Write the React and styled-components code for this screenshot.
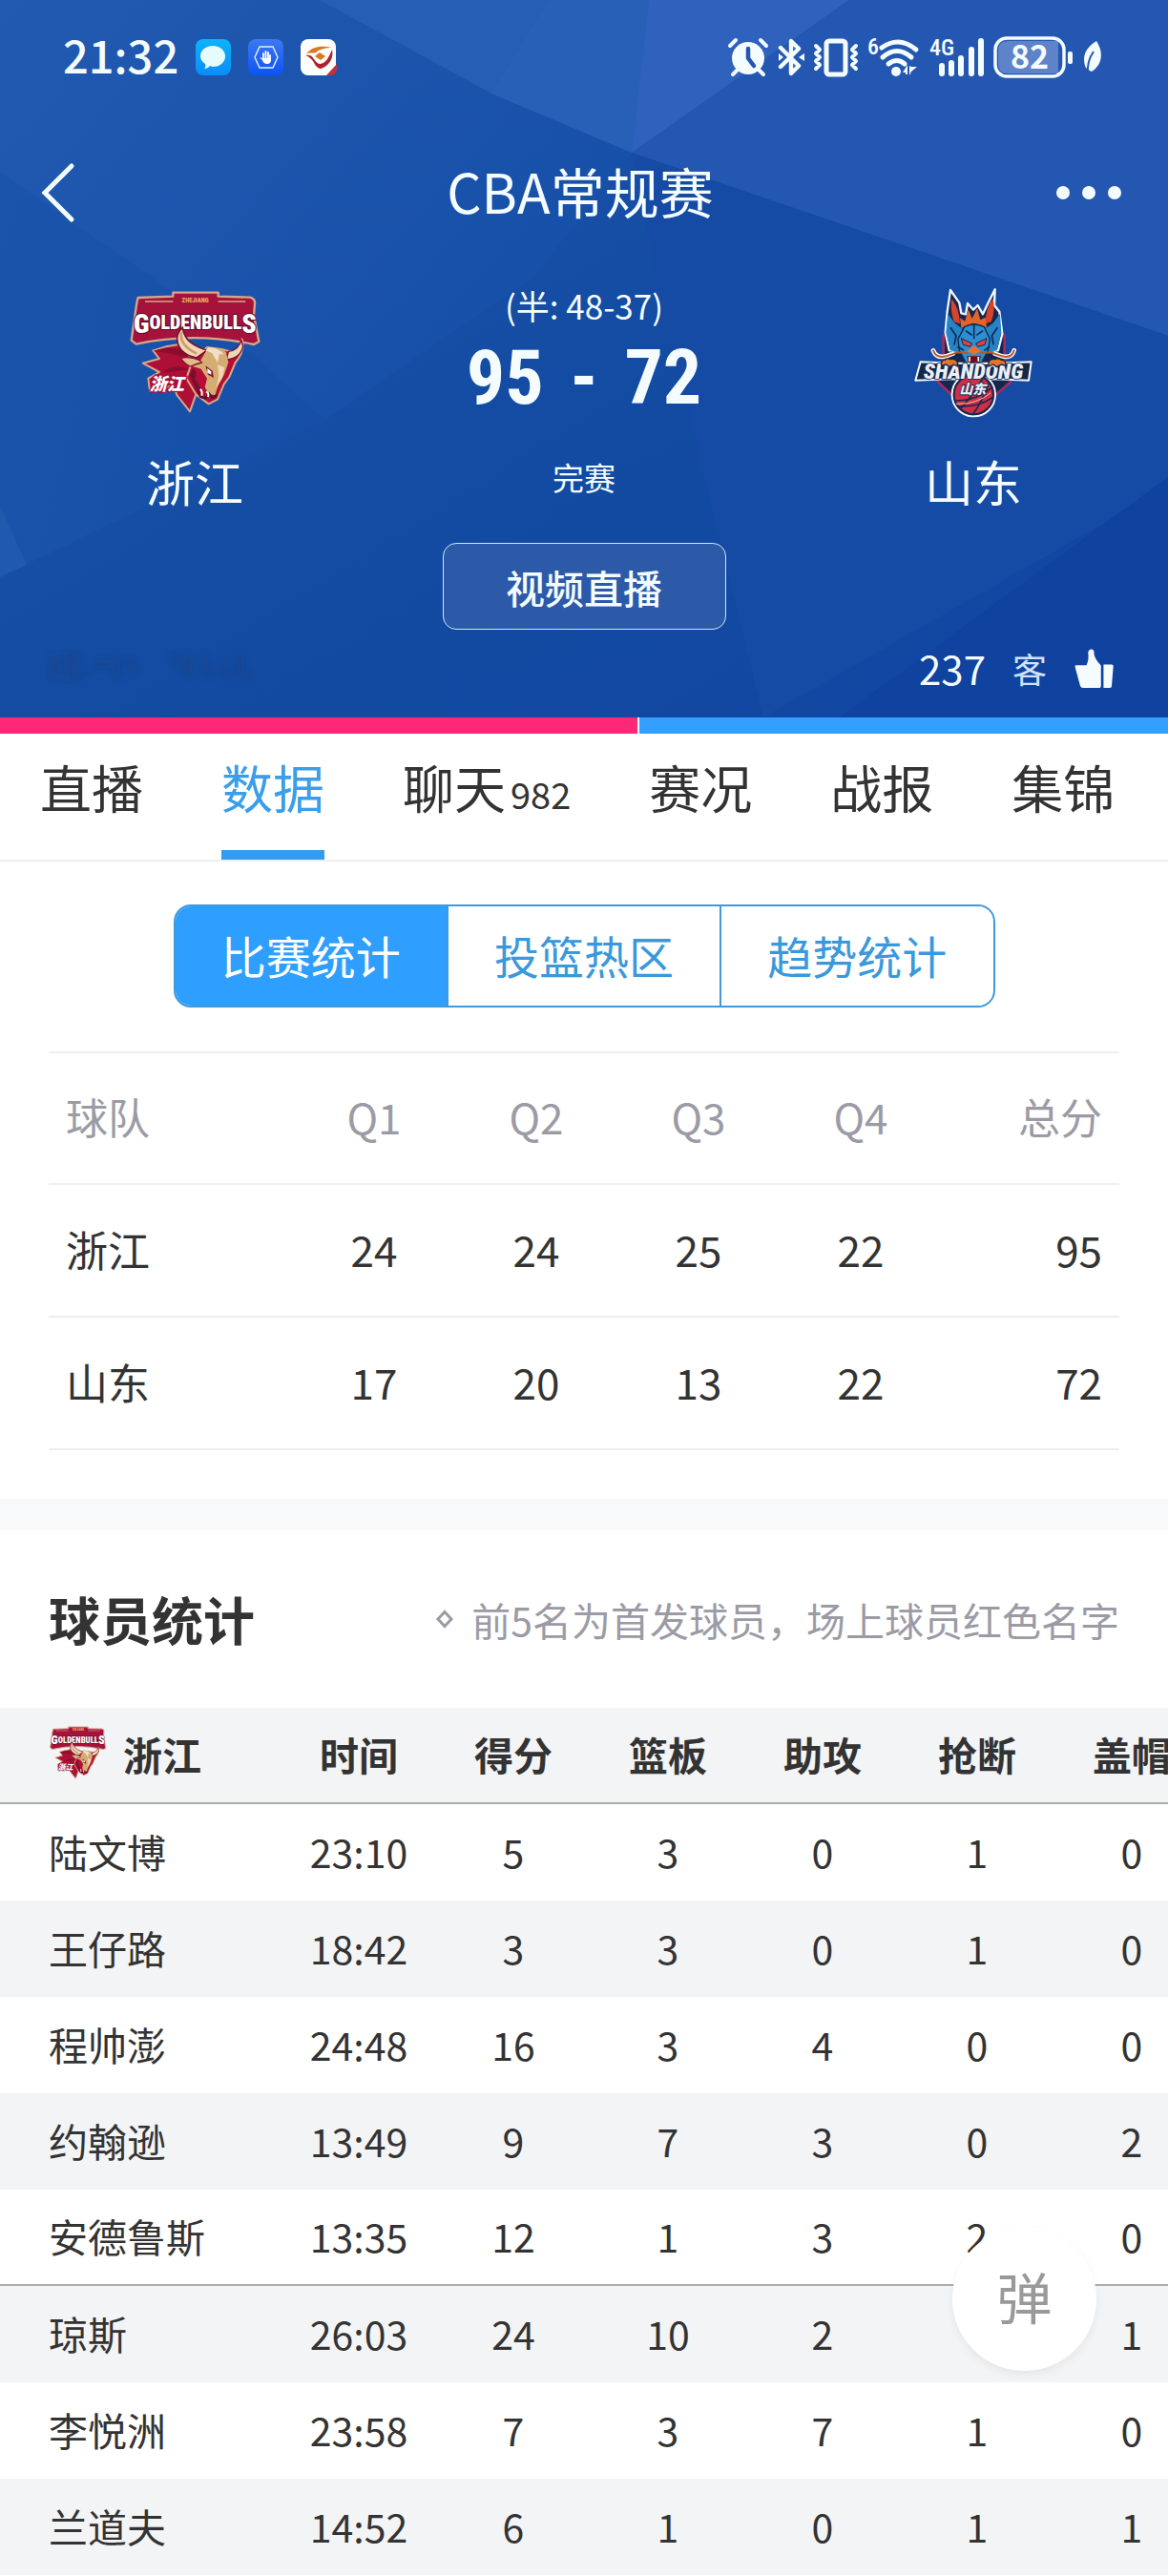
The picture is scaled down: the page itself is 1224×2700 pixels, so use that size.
import React from 'react';
import styled, { createGlobalStyle } from 'styled-components';

const GlobalStyle = createGlobalStyle`
  * {
    box-sizing: border-box;
  }
  body {
    margin: 0;
    background: #fff;
    color: #333;
    font-family: 'Noto Sans CJK SC', 'Noto Sans', sans-serif;
  }
  button {
    border: 0;
    padding: 0;
    background: none;
    color: inherit;
    font-family: inherit;
    cursor: pointer;
  }
  a {
    color: inherit;
    text-decoration: none;
  }
`;

const Page = styled.div`
  overflow: hidden;
`;

const Hero = styled.header`
  position: relative;
  overflow: hidden;
  padding-bottom: 12px;
  background: #1450a6;
  color: #f4fcff;
`;

const Backdrop = styled.svg`
  position: absolute;
  inset: 0;
  width: 100%;
  height: 100%;
`;

const HeroContent = styled.div`
  position: relative;
`;

const StatusBar = styled.div`
  display: flex;
  align-items: center;
  justify-content: space-between;
  height: 120px;
  padding: 0 68px 0 66px;
`;

const StatusGroup = styled.div`
  display: flex;
  align-items: center;
  gap: ${({ $gap }) => $gap}px;
`;

const Clock = styled.time`
  padding-bottom: 6px;
  font-size: 47px;
  font-weight: 500;
  line-height: 56px;
`;

const NavBar = styled.div`
  display: grid;
  grid-template-columns: 1fr auto 1fr;
  align-items: center;
  height: 164px;
  padding: 0 48px 0 40px;
`;

const IconButton = styled.button`
  display: flex;
  justify-self: ${({ $align }) => $align};
`;

const Title = styled.h1`
  margin: 0;
  padding-bottom: 6px;
  font-size: 57px;
  font-weight: 400;
  line-height: 80px;
`;

const Match = styled.div`
  display: grid;
  grid-template-columns: 1fr 1fr 1fr;
  padding-top: 16px;
`;

const Column = styled.div`
  display: flex;
  flex-direction: column;
  align-items: center;
`;

const TeamName = styled.div`
  margin-top: 26px;
  font-size: 51px;
  line-height: 76px;
`;

const Small = styled.div`
  font-size: ${({ $size }) => $size}px;
  line-height: 40px;
`;

const Score = styled.div`
  display: flex;
  justify-content: center;
  gap: 28px;
  margin: 16px 0 44px;
  font-family: 'Roboto Condensed', 'Noto Sans CJK SC', sans-serif;
  font-size: 80px;
  font-weight: 700;
  line-height: 80px;
`;

const LiveButton = styled.button`
  width: 297px;
  height: 91px;
  margin-top: 49px;
  border: 1px solid #c8eaf5;
  border-radius: 14px;
  background: #2c5aa8;
  font-size: 41px;
  font-weight: 500;
`;

const Votes = styled.div`
  display: flex;
  align-items: center;
  justify-content: space-between;
  height: 80px;
  padding: 0 56px 0 48px;
`;

const VoteGroup = styled.div`
  display: flex;
  align-items: center;
  gap: 28px;
`;

const VoteCount = styled.span`
  font-size: 42px;
  line-height: 56px;
`;

const VoteSide = styled.span`
  font-size: 36px;
  line-height: 56px;
  color: #cfe2fa;
`;

const VoteBar = styled.div`
  display: flex;
  gap: 2px;
  height: 17px;
`;

const VoteShare = styled.div`
  background: ${({ $color }) => $color};
`;

const Tabs = styled.nav`
  display: flex;
  gap: 82px;
  height: 134px;
  padding-left: 42px;
  border-bottom: 2px solid #eee;
`;

const Tab = styled.a`
  display: flex;
  align-items: baseline;
  height: 132px;
  padding-top: 16px;
  border-bottom: 10px solid ${({ $active }) => ($active ? '#359bef' : 'transparent')};
  color: ${({ $active }) => ($active ? '#3a9eea' : '#333')};
  font-size: 54px;
  line-height: 80px;
  white-space: nowrap;
`;

const TabCount = styled.span`
  margin-left: 5px;
  font-size: 38px;
`;

const Segments = styled.div`
  display: flex;
  width: 861px;
  height: 108px;
  margin: 45px auto 0;
  border: 2px solid #4099dc;
  border-radius: 18px;
  overflow: hidden;
`;

const Segment = styled.button`
  flex: 1;
  padding-bottom: 4px;
  background: ${({ $active }) => ($active ? '#2f9fff' : '#fff')};
  color: ${({ $active }) => ($active ? '#fff' : '#3a98dc')};
  font-size: 47px;

  & + & {
    border-left: 2px solid #4099dc;
  }
`;

const QuarterSection = styled.section`
  padding: 46px 51px 51px;
`;

const QuarterTable = styled.table`
  width: 100%;
  table-layout: fixed;
  border-spacing: 0;
  border-top: 2px solid #eee;
`;

const QuarterCell = styled.td`
  width: ${({ $width }) => ($width ? `${$width}px` : 'auto')};
  height: ${({ $head }) => ($head ? 138 : 139)}px;
  padding: 0 18px 4px;
  border-bottom: 2px solid #eee;
  color: ${({ $head }) => ($head ? '#9b9ba5' : '#333')};
  font-size: 44px;
  font-weight: 400;
  line-height: 64px;
  text-align: ${({ $align }) => $align || 'center'};
`;

const Divider = styled.div`
  height: 33px;
  background: #f8f9fb;
`;

const SectionHead = styled.div`
  display: flex;
  align-items: center;
  justify-content: space-between;
  height: 186px;
  padding: 0 51px;
`;

const SectionTitle = styled.h2`
  margin: 0;
  font-size: 54px;
  font-weight: 700;
  line-height: 80px;
`;

const Note = styled.p`
  display: flex;
  align-items: center;
  gap: 18px;
  margin: 0;
  color: #9b9ba5;
  font-size: 41px;
  line-height: 60px;
`;

const Scroller = styled.div`
  overflow-x: auto;
  scrollbar-width: none;
`;

const PlayerTable = styled.table`
  width: 1267px;
  table-layout: fixed;
  border-spacing: 0;
`;

const PlayerRow = styled.tr`
  background: ${({ $shaded }) => ($shaded ? '#f3f4f6' : '#fff')};

  & > * {
    height: 101px;
    padding: 0 0 4px;
    border-bottom: ${({ $ruled }) => ($ruled ? '2px solid #adadad' : '0')};
    font-size: 41px;
    line-height: 60px;
  }
`;

const StatHead = styled.th`
  width: 162px;
  font-weight: 700;
  text-align: center;
`;

const TeamHead = styled.th`
  width: 295px;
  text-align: left;
`;

const TeamLabel = styled.div`
  display: flex;
  align-items: center;
  gap: 17px;
  padding-left: 51px;
`;

const PlayerName = styled.th`
  font-weight: 400;
  text-align: left;

  & > a {
    padding-left: 51px;
  }
`;

const Stat = styled.td`
  text-align: center;
`;

const BarrageButton = styled.button`
  position: fixed;
  right: 75px;
  bottom: 215px;
  width: 151px;
  height: 151px;
  padding-bottom: 8px;
  border-radius: 50%;
  background: #fff;
  box-shadow: 0 4px 10px rgba(0, 0, 0, 0.06);
  color: #999;
  font-size: 58px;
`;

const votes = { home: 286, away: 237 };

const tabs = [
  { name: '直播' },
  { name: '数据', active: true },
  { name: '聊天', count: 982 },
  { name: '赛况' },
  { name: '战报' },
  { name: '集锦' },
];

const segments = ['比赛统计', '投篮热区', '趋势统计'];

const quarters = [
  { team: '浙江', points: [24, 24, 25, 22], total: 95 },
  { team: '山东', points: [17, 20, 13, 22], total: 72 },
];

const statNames = ['时间', '得分', '篮板', '助攻', '抢断', '盖帽'];

const players = [
  { name: '陆文博', stats: ['23:10', 5, 3, 0, 1, 0] },
  { name: '王仔路', stats: ['18:42', 3, 3, 0, 1, 0] },
  { name: '程帅澎', stats: ['24:48', 16, 3, 4, 0, 0] },
  { name: '约翰逊', stats: ['13:49', 9, 7, 3, 0, 2] },
  { name: '安德鲁斯', stats: ['13:35', 12, 1, 3, 2, 0] },
  { name: '琼斯', stats: ['26:03', 24, 10, 2, null, 1] },
  { name: '李悦洲', stats: ['23:58', 7, 3, 7, 1, 0] },
  { name: '兰道夫', stats: ['14:52', 6, 1, 0, 1, 1] },
];

const Facets = () => (
  <Backdrop viewBox="0 0 1224 752" preserveAspectRatio="none" aria-hidden="true">
    <defs>
      <linearGradient id="base" x1="0" y1="0" x2="1" y2="1">
        <stop offset="0" stopColor="#2159b0" />
        <stop offset="0.5" stopColor="#134ca2" />
        <stop offset="1" stopColor="#1145a2" />
      </linearGradient>
      <linearGradient id="leftFacet" x1="0" y1="0" x2="1" y2="0.6">
        <stop offset="0" stopColor="#225ab2" />
        <stop offset="1" stopColor="#164fa7" />
      </linearGradient>
      <linearGradient id="lowFacet" x1="0" y1="0" x2="1" y2="0.3">
        <stop offset="0" stopColor="#1b54ab" />
        <stop offset="1" stopColor="#164fa7" />
      </linearGradient>
    </defs>
    <path d="M0 0H1224V752H0Z" fill="url(#base)" />
    <path d="M0 0H335L515 98 662 160 560 290 340 440 0 180Z" fill="url(#leftFacet)" />
    <path d="M0 180 230 340 340 440 0 605Z" fill="url(#lowFacet)" />
    <path d="M0 530 28 592 0 605Z" fill="#1f5aae" />
    <path d="M335 0H890L662 160 515 98Z" fill="#265eb5" />
    <path d="M575 0H890L662 160 515 98Z" fill="#285fb7" />
    <path d="M680 0H890L662 160Z" fill="#2f62bc" />
    <path d="M890 0H1224V352L662 160Z" fill="#2457b1" />
    <path d="M662 160 1224 352V510L800 752 690 300Z" fill="#164ba5" />
    <path d="M1224 500V752H880Z" fill="#10429f" />
  </Backdrop>
);

const MessageIcon = () => (
  <svg width="37" height="38" viewBox="0 0 37 38">
    <defs>
      <linearGradient id="msg" x1="0" y1="0" x2="0" y2="1">
        <stop offset="0" stopColor="#0cb4f8" />
        <stop offset="1" stopColor="#0a8cfb" />
      </linearGradient>
    </defs>
    <rect width="37" height="38" rx="8" fill="url(#msg)" />
    <path d="M18 7c8 0 13 5 13 11s-5 11-13 11l-3-1c-1 2-4 3-6 3 1-1 2-3 1-5-3-2-5-5-5-8C5 12 10 7 18 7z" fill="#e6fbfc" />
  </svg>
);

const HandIcon = () => (
  <svg width="37" height="38" viewBox="0 0 37 38">
    <defs>
      <linearGradient id="hand" x1="0" y1="0" x2="0" y2="1">
        <stop offset="0" stopColor="#3f79ee" />
        <stop offset="1" stopColor="#0b53f5" />
      </linearGradient>
    </defs>
    <rect width="37" height="38" rx="8" fill="url(#hand)" />
    <path d="M12 8h14l5 11-5 11H12L7 19z" fill="none" stroke="#e2f0ff" strokeWidth="1.4" />
    <path d="M16 21v-6M18.500 20v-7M21 20v-6M23 21v-4" fill="none" stroke="#fff" strokeWidth="1.800" strokeLinecap="round" />
    <path d="M12 19l3 1h9v3q-1 3-4 3-4 0-5-4z" fill="#fff" />
  </svg>
);

const BrandIcon = () => (
  <svg width="38" height="38" viewBox="0 0 38 38">
    <rect width="37" height="38" rx="8" fill="#fdfdfb" />
    <path d="M6 15C12 8 22 6 33 9c-7 0-14 2-17 5-3 1-6 0-10 1z" fill="#d9781f" />
    <path d="M5 17c4-1 7 0 9 4 2 3 4 5 7 5 6-1 9-8 12-15 2 9-3 17-12 20-5-1-6-5-8-8-2-2-4-5-8-6z" fill="#b0202d" />
    <path d="M20 14l6 4-5 4-6-4z" fill="#d9781f" />
    <path d="M38 26v6q-1 6-8 6h-3z" fill="#c3303a" />
  </svg>
);

const AlarmIcon = () => (
  <svg width="44" height="44" viewBox="0 0 44 44">
    <circle cx="22" cy="23" r="17" fill="#f4fcff" />
    <path d="M22 13v10l6 8" fill="none" stroke="#2457b1" strokeWidth="4.500" strokeLinecap="round" strokeLinejoin="round" />
    <path d="M3 10l6-6M41 10l-6-6M11 35l-5 5M33 35l5 5" fill="none" stroke="#f4fcff" strokeWidth="4" strokeLinecap="round" />
  </svg>
);

const BluetoothIcon = () => (
  <svg width="28" height="42" viewBox="0 0 28 42">
    <path d="M3 11l19 19-8 8V4l8 8L3 31" fill="none" stroke="#f4fcff" strokeWidth="4.400" strokeLinejoin="round" strokeLinecap="round" />
    <path d="M1 17l5 4-5 4zM28 17l-6 4 6 4z" fill="#f4fcff" />
  </svg>
);

const VibrateIcon = () => (
  <svg width="48" height="42" viewBox="0 0 48 42">
    <g fill="none" stroke="#f4fcff" strokeWidth="5" strokeLinejoin="round" strokeLinecap="round">
      <rect x="14" y="4" width="20" height="35" rx="3" />
      <path d="M3 9l4 4-4 4 4 4-4 4 4 4-4 4M45 9l-4 4 4 4-4 4 4 4-4 4 4 4" strokeWidth="4" />
    </g>
  </svg>
);

const IconText = styled.text`
  fill: #f4fcff;
  font-family: 'Roboto Condensed', 'Noto Sans CJK SC', sans-serif;
  font-size: ${({ $size }) => $size}px;
  font-weight: 500;
`;

const WifiIcon = () => (
  <svg width="56" height="56" viewBox="0 -6 56 56">
    <IconText $size={24} x="0" y="19">6</IconText>
    <g fill="none" stroke="#f4fcff" strokeWidth="5" strokeLinecap="round">
      <path d="M15 12Q33-1 51 14" />
      <path d="M16 22Q31 9 46 22" />
      <path d="M22 29Q31 22 39 29" />
    </g>
    <circle cx="30" cy="37" r="5" fill="#f4fcff" />
    <path d="M37 38l5-8v10h-2v-2zM44 31v10l2-4 6-5h-6z" fill="#f4fcff" />
  </svg>
);

const SignalIcon = () => (
  <svg width="58" height="56" viewBox="0 -6 58 56">
    <IconText $size={24} x="0" y="20">4G</IconText>
    <path d="M13 39v-8M23 39V28M33 39V23M44 39V14M54 39V5" stroke="#f4fcff" strokeWidth="6" strokeLinecap="round" />
  </svg>
);

const BatteryIcon = () => (
  <svg width="84" height="60" viewBox="0 -8 84 60">
    <path d="M15 5h53v34H15Q5 39 5 29V15Q5 5 15 5z" fill="#5f83c9" />
    <rect x="2" y="2" width="72" height="40" rx="12" fill="none" stroke="#f4fcff" strokeWidth="3.500" />
    <rect x="78" y="16" width="5" height="13" rx="2" fill="#f4fcff" />
    <text x="38" y="34" textAnchor="middle" fontSize="34" fontWeight="700" fill="#f4fcff">82</text>
  </svg>
);

const LeafIcon = () => (
  <svg width="22" height="44" viewBox="0 0 22 44">
    <path d="M15 5c8 12 6 25-5 32-3-1-6-3-7-6C0 20 4 12 15 5z" fill="#f4fcff" />
    <path d="M12 16Q5 26 6 39" stroke="#2457b1" strokeWidth="2" fill="none" />
  </svg>
);

const LogoText = styled.text`
  fill: ${({ $fill }) => $fill || '#fff'};
  font-family: ${({ $cjk }) => ($cjk ? "'Noto Sans CJK SC'" : "'Roboto Condensed', 'Liberation Sans Narrow'")}, sans-serif;
  font-size: ${({ $size }) => $size}px;
  font-style: ${({ $italic }) => ($italic ? 'italic' : 'normal')};
  font-weight: 900;
  paint-order: stroke;
`;

const BullsLogo = ({ size }) => (
  <svg width={size} height={size} viewBox="96 60 420 420" role="img" aria-label="浙江">
    <g strokeLinejoin="round">
      <path d="M128 96 238 92V80H380V92L480 95Q497 99 495 116L492 152 508 234 492 243Q300 202 122 242L107 230 124 112Z" fill="#a5123b" stroke="#d8a789" strokeWidth="7" />
      <path d="M150 108H238M380 108H466" stroke="#d8a789" strokeWidth="4" />
      <path d="M175 262 215 250 262 242 300 300 330 330 310 400 291 454 250 402 240 372 165 390 160 350 195 330 143 302 195 288Z" fill="#ae0f35" stroke="#d8a789" strokeWidth="6" />
      <path d="M300 290 345 252 390 258 440 270 455 226 Q466 262 434 300L415 345 398 368 378 416 350 430 310 400 280 350Z" fill="#b40f36" stroke="#d8a789" strokeWidth="6" />
      <path d="M175 264Q230 246 268 262L292 288Q240 270 175 264ZM205 332Q240 300 290 322" fill="#8d0c2e" />
    </g>
    <LogoText $size={20} $fill="#e6ab67" x="308" y="110" textAnchor="middle">ZHEJIANG</LogoText>
    <LogoText $size={60} stroke="#5e0e29" strokeWidth="6" x="307" y="206" textAnchor="middle">
      <tspan fontSize="84">G</tspan>
      <tspan dy="-10">OLDENBULL</tspan>
      <tspan fontSize="84" dy="10">S</tspan>
    </LogoText>
    <path d="M268 190Q244 210 253 240 264 276 312 285L344 262Q296 244 284 228 270 208 268 190Z" fill="#f1d6b5" stroke="#7a0f2c" strokeWidth="5" />
    <path d="M264 205Q256 244 312 272" fill="none" stroke="#c99e6f" strokeWidth="8" />
    <path d="M452 228Q446 262 412 265L406 290Q448 288 458 250Z" fill="#f1d6b5" stroke="#7a0f2c" strokeWidth="4" />
    <path d="M344 260Q378 246 405 268L412 300 398 340 382 366 370 402 352 400 338 378 345 350 326 320 300 312 262 288Q300 280 322 298Z" fill="#d3ad72" />
    <path d="M350 252Q384 254 398 276L384 272 378 300 360 270 340 262Z" fill="#f1dfc6" />
    <path d="M262 286Q292 280 320 292L328 300Q306 306 292 312 274 304 262 286Z" fill="#e0bd8c" stroke="#8d0c2e" strokeWidth="4" />
    <path d="M340 310 362 326 366 348 348 338Z" fill="#8d0c2e" />
    <path d="M346 318 358 328V338L346 332Z" fill="#fff" />
    <path d="M378 306 400 316 392 350 374 380 382 340Z" fill="#f1d6b5" />
    <path d="M316 386 324 408 340 412 352 398 362 412 376 402" fill="none" stroke="#5e0e29" strokeWidth="7" />
    <path d="M322 382q10 8 6 22M342 392q10 4 6 16" fill="none" stroke="#fff" strokeWidth="6" />
    <path d="M300 318Q318 330 306 352L326 382 312 392 290 340Z" fill="#7a0f2c" />
    <LogoText $cjk $italic $size={54} stroke="#a5123b" strokeWidth="8" x="164" y="388">浙江</LogoText>
  </svg>
);

const DragonLogo = ({ size }) => (
  <svg width={size} height={size} viewBox="90 60 420 420" role="img" aria-label="山东">
    <g strokeLinejoin="round">
      <path d="M206 214H398V290L418 360 370 402 302 440 232 402 188 360 206 290Z" fill="#14284f" stroke="#a52a5b" strokeWidth="8" />
      <path d="M228 72 256 112 262 145 276 148 282 114 300 134 314 120 330 148 344 118 368 70 366 120 382 140 391 210 378 262H224L212 205 218 140Z" fill="#14284f" stroke="#eef7ff" strokeWidth="7" />
      <path d="M232 100Q256 130 258 178L240 172Q226 140 232 100ZM362 98Q338 128 338 178L356 172Q370 140 362 98Z" fill="#d9432c" />
      <path d="M220 146 242 176 266 194 256 268 228 262 214 206ZM384 146 362 176 336 194 346 268 374 262 388 206Z" fill="#2683c6" />
      <path d="M228 190 246 216 240 244M376 190 358 216 364 244" fill="none" stroke="#14284f" strokeWidth="5" />
      <path d="M262 192 258 160 274 170 284 132 296 162 312 130 322 166 338 158 342 192 322 182 302 176 282 182Z" fill="#e4642a" />
      <path d="M272 188Q302 172 334 188L352 226 346 262 326 300H276L256 262 252 226Z" fill="#2b8fd2" stroke="#14284f" strokeWidth="4" />
      <path d="M302 182V226M276 200 296 214M330 200 310 214M250 250 270 262M352 250 334 262" stroke="#14284f" strokeWidth="5" />
      <path d="M262 224 296 240 290 250 268 244ZM342 224 308 240 314 250 336 244Z" fill="#e2413a" stroke="#14284f" strokeWidth="3" />
      <path d="M302 246 324 264 302 276 280 264Z" fill="#e4742a" />
      <path d="M280 280H324L318 304H286Z" fill="#6b1020" />
      <path d="M288 282v14M316 282v14" stroke="#fff" strokeWidth="5" />
      <path d="M174 262Q184 288 214 280L236 272M428 262Q420 288 390 280L368 272" fill="none" stroke="#fff" strokeWidth="14" strokeLinecap="round" />
      <path d="M174 262Q184 288 214 280L250 268 282 270M428 262Q420 288 390 280L356 268 322 270" fill="none" stroke="#b35b2a" strokeWidth="6" strokeLinecap="round" />
      <path d="M134 298 Q300 308 482 298L474 356Q302 348 118 356Z" fill="#172744" stroke="#f2f8ff" strokeWidth="6" />
    </g>
    <circle cx="301" cy="401" r="68" fill="#cf2f46" stroke="#f2f8ff" strokeWidth="6" />
    <circle cx="301" cy="401" r="62" fill="none" stroke="#14284f" strokeWidth="6" />
    <path d="M244 420Q310 420 356 380M250 438Q320 440 360 410M300 460Q330 420 350 362M262 444Q300 400 330 350" fill="none" stroke="#14284f" strokeWidth="5" />
    <path d="M246 430Q310 432 354 396" fill="none" stroke="#f6b9bd" strokeWidth="3" />
    <path d="M136 308H466L460 346H132Z" fill="#172744" />
    <g stroke="#14284f" strokeWidth="5">
      <LogoText $italic $size={68} $fill="#e9eff6" x="300" y="350" textAnchor="middle">SHANDONG</LogoText>
      <LogoText $cjk $italic $size={42} $fill="#e9eff6" x="298" y="398" textAnchor="middle">山东</LogoText>
    </g>
    <g fill="#e4742a" stroke="#14284f" strokeWidth="4">
      <path d="M200 310Q196 292 210 292 218 284 228 290 244 286 250 300V312L238 306 226 314 214 306Z" />
      <path d="M348 312V300Q354 286 368 290 378 284 388 292 404 292 402 310L388 306 374 314 362 306Z" />
    </g>
  </svg>
);

const ThumbIcon = () => (
  <svg width="43" height="43" viewBox="676 116 130 130">
    <path d="M682 171h35q9-20 5-40 3-12 14-10 6 2 5 15 3 18 22 36v66q0 5-5 5h-52q-7 0-9-7l-15-55q-2-10 0-10zM771 169h26q6 0 5 7l-5 60q0 7-6 7h-20z" fill="#f4fcff" />
  </svg>
);

/* the home side's vote line is faded out almost completely */
const FadedVotes = () => (
  <svg width="222" height="52" viewBox="0 0 222 52" aria-hidden="true">
    <defs>
      <filter id="fade">
        <feGaussianBlur stdDeviation="3" />
      </filter>
    </defs>
    <path d="M8 12v26M18 10l14 6-14 10 18 6-14 8M50 22h18M74 16v22M86 18l8 14M132 10l12 16M150 12v24M164 14l8 22M184 24l8 12M204 10v26M212 32v8" stroke="#153f80" strokeOpacity="0.4" strokeWidth="8" fill="none" filter="url(#fade)" />
  </svg>
);

const PlayerStats = () => (
  <Scroller>
    <PlayerTable>
      <thead>
        <PlayerRow $shaded $ruled>
          <TeamHead scope="col">
            <TeamLabel>
              <BullsLogo size={61} />
              浙江
            </TeamLabel>
          </TeamHead>
          {statNames.map(name => (
            <StatHead key={name} scope="col">{name}</StatHead>
          ))}
        </PlayerRow>
      </thead>
      <tbody>
        {players.map((player, index) => (
          <PlayerRow key={player.name} $shaded={index % 2 === 1} $ruled={index === 4}>
            <PlayerName scope="row">
              <a href="#player">{player.name}</a>
            </PlayerName>
            {player.stats.map((value, i) => (
              <Stat key={statNames[i]}>{value}</Stat>
            ))}
          </PlayerRow>
        ))}
      </tbody>
    </PlayerTable>
  </Scroller>
);

const App = () => (
  <Page>
    <GlobalStyle />
    <Hero>
      <Facets />
      <HeroContent>
        <StatusBar>
          <StatusGroup $gap={18}>
            <Clock>21:32</Clock>
            <MessageIcon />
            <HandIcon />
            <BrandIcon />
          </StatusGroup>
          <StatusGroup $gap={9}>
            <AlarmIcon />
            <BluetoothIcon />
            <VibrateIcon />
            <WifiIcon />
            <SignalIcon />
            <BatteryIcon />
            <LeafIcon />
          </StatusGroup>
        </StatusBar>
        <NavBar>
          <IconButton $align="start" aria-label="返回">
            <svg width="40" height="64" viewBox="0 0 40 64">
              <path d="M35 4 7 32 35 60" fill="none" stroke="#f4fcff" strokeWidth="5" strokeLinecap="round" />
            </svg>
          </IconButton>
          <Title>CBA常规赛</Title>
          <IconButton $align="end" aria-label="更多">
            <svg width="72" height="16" viewBox="0 0 72 16" fill="#f4fcff">
              <circle cx="10" cy="8" r="7" />
              <circle cx="37" cy="8" r="7" />
              <circle cx="64" cy="8" r="7" />
            </svg>
          </IconButton>
        </NavBar>
        <Match>
          <Column>
            <BullsLogo size={140} />
            <TeamName>浙江</TeamName>
          </Column>
          <Column>
            <Small $size={35}>(半: 48-37)</Small>
            <Score>
              <span>95</span>
              <span>-</span>
              <span>72</span>
            </Score>
            <Small $size={33}>完赛</Small>
            <LiveButton>视频直播</LiveButton>
          </Column>
          <Column>
            <DragonLogo size={140} />
            <TeamName>山东</TeamName>
          </Column>
        </Match>
        <Votes>
          <FadedVotes />
          <VoteGroup>
            <VoteCount>{votes.away}</VoteCount>
            <VoteSide>客</VoteSide>
            <IconButton aria-label="支持客队">
              <ThumbIcon />
            </IconButton>
          </VoteGroup>
        </Votes>
      </HeroContent>
    </Hero>
    <VoteBar>
      <VoteShare $color="#ff2878" style={{ flexGrow: votes.home }} />
      <VoteShare $color="#359fff" style={{ flexGrow: votes.away }} />
    </VoteBar>
    <Tabs>
      {tabs.map(tab => (
        <Tab key={tab.name} href="#tab" $active={tab.active}>
          {tab.name}
          {tab.count && <TabCount>{tab.count}</TabCount>}
        </Tab>
      ))}
    </Tabs>
    <Segments>
      {segments.map((name, index) => (
        <Segment key={name} $active={index === 0}>{name}</Segment>
      ))}
    </Segments>
    <QuarterSection>
      <QuarterTable>
        <thead>
          <tr>
            <QuarterCell as="th" scope="col" $head $align="left" $width={256}>球队</QuarterCell>
            {['Q1', 'Q2', 'Q3', 'Q4'].map(name => (
              <QuarterCell key={name} as="th" scope="col" $head $width={170}>{name}</QuarterCell>
            ))}
            <QuarterCell as="th" scope="col" $head $align="right">总分</QuarterCell>
          </tr>
        </thead>
        <tbody>
          {quarters.map(row => (
            <tr key={row.team}>
              <QuarterCell as="th" scope="row" $align="left">{row.team}</QuarterCell>
              {row.points.map((value, i) => (
                <QuarterCell key={i}>{value}</QuarterCell>
              ))}
              <QuarterCell $align="right">{row.total}</QuarterCell>
            </tr>
          ))}
        </tbody>
      </QuarterTable>
    </QuarterSection>
    <Divider />
    <SectionHead>
      <SectionTitle>球员统计</SectionTitle>
      <Note>
        <svg width="20" height="20" viewBox="0 0 20 20" aria-hidden="true">
          <path d="M10 2.500 17 10 10 17.500 3 10Z" fill="none" stroke="#9b9ba5" strokeWidth="3" />
        </svg>
        前5名为首发球员，场上球员红色名字
      </Note>
    </SectionHead>
    <PlayerStats />
    <BarrageButton>弹</BarrageButton>
  </Page>
);

export default App;
